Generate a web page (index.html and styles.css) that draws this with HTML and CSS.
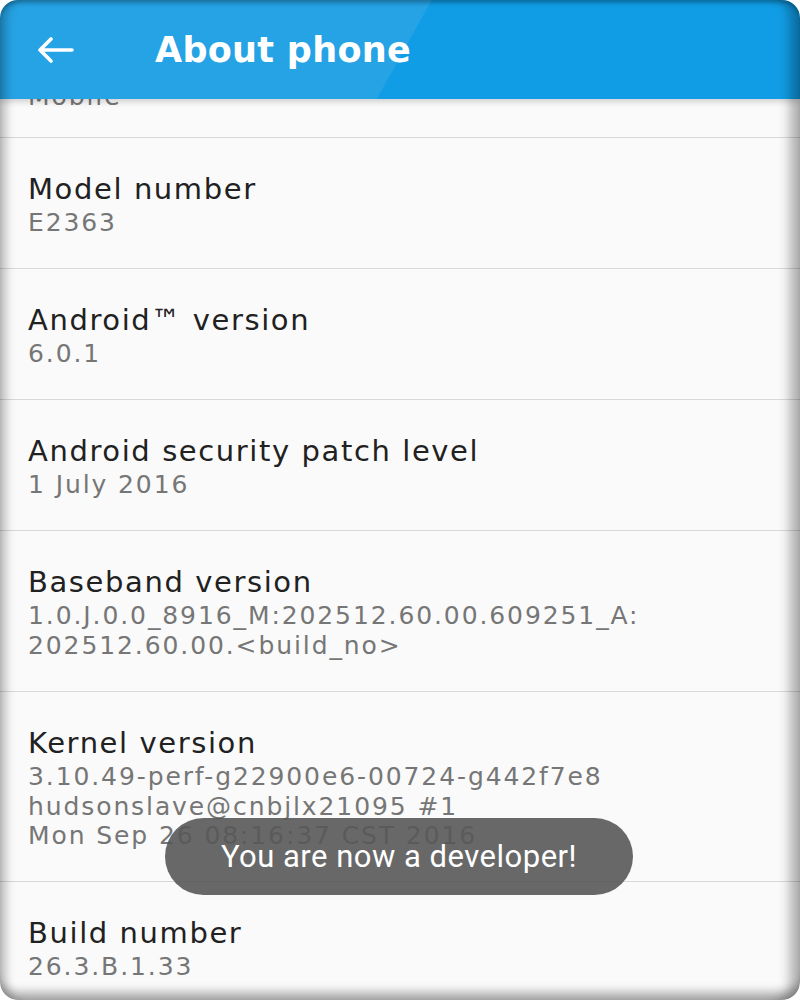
FILE: index.html
```html
<!DOCTYPE html>
<html lang="en">
<head>
    <meta charset="UTF-8">
    <meta name="viewport" content="width=device-width, initial-scale=1.0">
    <title>About phone</title>
    <link rel="stylesheet" href="styles.css">
</head>
<body>
    <div class="screen">
        <div class="topbar">
            <span class="back">
                <svg width="38" height="26" viewBox="0 0 38 26">
                    <path d="M3 13 H35 M14 2 L3 13 L14 24" fill="none" stroke="#fff" stroke-width="3.6" stroke-linecap="round" stroke-linejoin="round"/>
                </svg>
            </span>
            <span class="title">About phone</span>
        </div>

        <ul class="list">
            <li class="item cut">
                <div class="name">Network</div>
                <div class="value">Mobile</div>
            </li>
            <li class="item">
                <div class="name">Model number</div>
                <div class="value">E2363</div>
            </li>
            <li class="item">
                <div class="name">Android™ version</div>
                <div class="value">6.0.1</div>
            </li>
            <li class="item">
                <div class="name">Android security patch level</div>
                <div class="value">1 July 2016</div>
            </li>
            <li class="item">
                <div class="name">Baseband version</div>
                <div class="value">1.0.J.0.0_8916_M:202512.60.00.609251_A:<br>202512.60.00.&lt;build_no&gt;</div>
            </li>
            <li class="item">
                <div class="name">Kernel version</div>
                <div class="value tight">3.10.49-perf-g22900e6-00724-g442f7e8<br>hudsonslave@cnbjlx21095 #1<br>Mon Sep 26 08:16:37 CST 2016</div>
            </li>
            <li class="item">
                <div class="name">Build number</div>
                <div class="value">26.3.B.1.33</div>
            </li>
        </ul>

        <div class="toast">You are now a developer!</div>
        <div class="edge"></div>
    </div>
</body>
</html>
```

FILE: styles.css
```css
* {
    margin: 0;
    padding: 0;
    box-sizing: border-box;
}
ul {
    list-style: none;
}
body {
    width: 800px;
    height: 1000px;
    background: #fff;
    font-family: "DejaVu Sans", "Open Sans", sans-serif;
}
.screen {
    position: relative;
    width: 800px;
    height: 1000px;
    overflow: hidden;
    border-radius: 18px;
    background: #fafafa;
}
.topbar {
    position: absolute;
    top: 0;
    left: 0;
    right: 0;
    z-index: 2;
    height: 99px;
    display: flex;
    align-items: center;
    padding-left: 37px;
    background: linear-gradient(119deg, #26a3e5 377px, #119de6 378px);
    box-shadow: 0 3px 6px rgba(0, 0, 0, 0.16);
}
.back {
    display: flex;
    width: 38px;
}
.title {
    margin-left: 80px;
    color: #fff;
    font-size: 35px;
    font-weight: bold;
    letter-spacing: 0.3px;
}
.list {
    margin-top: 7px;
}
.item {
    padding: 32px 20px 30px 28px;
    border-bottom: 1px solid #d8d8d8;
}
.item.cut {
    padding-top: 37px;
    padding-bottom: 25px;
}
.name {
    color: #212121;
    font-size: 29px;
    line-height: 38px;
    letter-spacing: 1.6px;
}
.value {
    color: #767676;
    font-size: 25px;
    line-height: 30px;
    letter-spacing: 1.9px;
}
.value.tight {
    line-height: 29.5px;
}
.toast {
    position: absolute;
    top: 818px;
    left: 165px;
    z-index: 3;
    width: 468px;
    height: 77px;
    border-radius: 39px;
    background: rgba(88, 88, 88, 0.9);
    color: #fff;
    font-family: Roboto, "Noto Sans", sans-serif;
    font-size: 31px;
    line-height: 77px;
    letter-spacing: 0.5px;
    text-align: center;
}
.edge {
    position: absolute;
    top: 0;
    left: 0;
    right: 0;
    bottom: 0;
    z-index: 4;
    border-radius: 18px;
    pointer-events: none;
    box-shadow: inset 12px 0 10px -6px rgba(0, 0, 0, 0.25),
                inset -16px 0 12px -6px rgba(0, 0, 0, 0.3),
                inset 0 -14px 10px -6px rgba(0, 0, 0, 0.3),
                inset 0 5px 4px -2px rgba(0, 0, 0, 0.25);
}
```
